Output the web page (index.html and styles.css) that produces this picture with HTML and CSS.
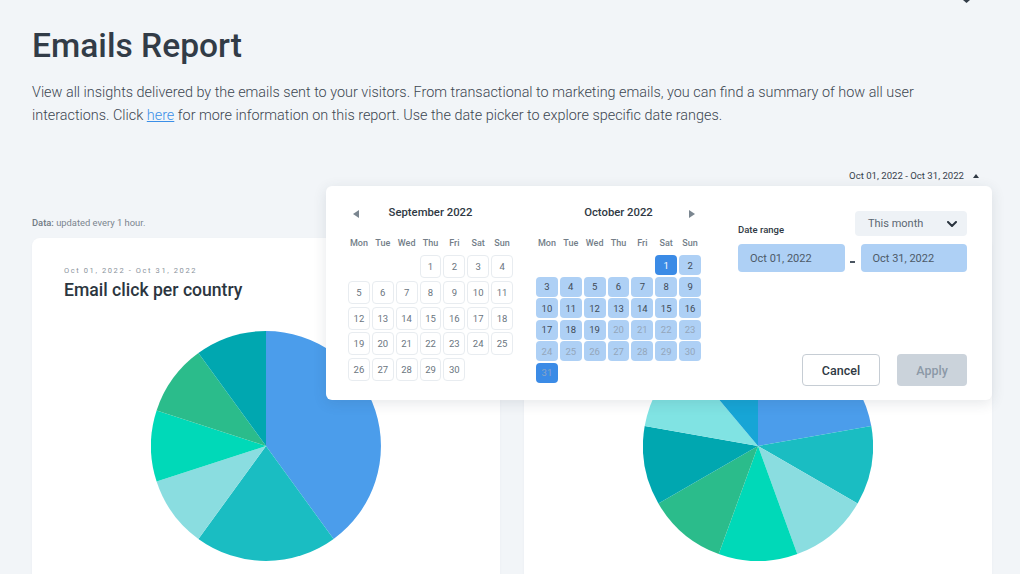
FILE: index.html
```html
<!DOCTYPE html>
<html lang="en">
<head>
<meta charset="utf-8">
<title>Emails Report</title>
<link rel="stylesheet" href="styles.css">
</head>
<body>
<div class="topbar"><svg class="top-icon" width="7" height="3" viewBox="0 0 7 3"><path d="M0 0h7L3.5 3z" fill="#333d48"/></svg></div>
<main class="page">
  <h1 class="title">Emails Report</h1>
  <p class="intro">View all insights delivered by the emails sent to your visitors. From transactional to marketing emails, you can find a summary of how all user interactions. Click <a href="#">here</a> for more information on this report. Use the date picker to explore specific date ranges.</p>

  <div class="range-bar">
    <button class="range-trigger" type="button">Oct 01, 2022 - Oct 31, 2022
      <svg width="6" height="4" viewBox="0 0 6 4"><path d="M0 4L3 0l3 4z" fill="#2f3944"/></svg>
    </button>

    <div class="picker">
      <div class="month">
        <div class="month-head">
          <svg class="nav nav-prev" width="6" height="8" viewBox="0 0 6 8"><path d="M6 0v8L0 4z" fill="#7b8690"/></svg>
          <span class="month-title">September 2022</span>
        </div>
        <div class="weekdays"><span>Mon</span><span>Tue</span><span>Wed</span><span>Thu</span><span>Fri</span><span>Sat</span><span>Sun</span></div>
        <div class="days days-sep">
          <span class="empty"></span><span class="empty"></span><span class="empty"></span>
          <span class="day">1</span><span class="day">2</span><span class="day">3</span><span class="day">4</span>
          <span class="day">5</span><span class="day">6</span><span class="day">7</span><span class="day">8</span><span class="day">9</span><span class="day">10</span><span class="day">11</span>
          <span class="day">12</span><span class="day">13</span><span class="day">14</span><span class="day">15</span><span class="day">16</span><span class="day">17</span><span class="day">18</span>
          <span class="day">19</span><span class="day">20</span><span class="day">21</span><span class="day">22</span><span class="day">23</span><span class="day">24</span><span class="day">25</span>
          <span class="day">26</span><span class="day">27</span><span class="day">28</span><span class="day">29</span><span class="day">30</span>
        </div>
      </div>

      <div class="month month-oct">
        <div class="month-head">
          <span class="month-title">October 2022</span>
          <svg class="nav nav-next" width="6" height="8" viewBox="0 0 6 8"><path d="M0 0v8l6-4z" fill="#7b8690"/></svg>
        </div>
        <div class="weekdays"><span>Mon</span><span>Tue</span><span>Wed</span><span>Thu</span><span>Fri</span><span>Sat</span><span>Sun</span></div>
        <div class="days days-oct">
          <span class="empty"></span><span class="empty"></span><span class="empty"></span><span class="empty"></span><span class="empty"></span>
          <span class="rday sel">1</span><span class="rday">2</span>
          <span class="rday">3</span><span class="rday">4</span><span class="rday">5</span><span class="rday">6</span><span class="rday">7</span><span class="rday">8</span><span class="rday">9</span>
          <span class="rday">10</span><span class="rday">11</span><span class="rday">12</span><span class="rday">13</span><span class="rday">14</span><span class="rday">15</span><span class="rday">16</span>
          <span class="rday">17</span><span class="rday">18</span><span class="rday">19</span><span class="rday off">20</span><span class="rday off">21</span><span class="rday off">22</span><span class="rday off">23</span>
          <span class="rday off">24</span><span class="rday off">25</span><span class="rday off">26</span><span class="rday off">27</span><span class="rday off">28</span><span class="rday off">29</span><span class="rday off">30</span>
          <span class="rday sel sel-off">31</span>
        </div>
      </div>

      <div class="panel">
        <div class="panel-top">
          <span class="label">Date range</span>
          <div class="select">
            <span>This month</span>
            <svg width="10" height="6" viewBox="0 0 10 6"><path d="M1 1l4 4 4-4" fill="none" stroke="#2a343e" stroke-width="2" stroke-linecap="round" stroke-linejoin="round"/></svg>
          </div>
        </div>
        <div class="inputs">
          <div class="date-input">Oct 01, 2022</div>
          <span class="dash"><i></i></span>
          <div class="date-input">Oct 31, 2022</div>
        </div>
        <div class="actions">
          <button class="btn btn-cancel" type="button">Cancel</button>
          <button class="btn btn-apply" type="button">Apply</button>
        </div>
      </div>
    </div>
  </div>

  <p class="data-note"><b>Data:</b> updated every 1 hour.</p>

  <div class="cards">
    <section class="card">
      <div class="card-date">Oct 01, 2022 - Oct 31, 2022</div>
      <h2 class="card-title">Email click per country</h2>
      <svg class="pie" width="230" height="230" viewBox="0 0 230 230">
        <path d="M115 115L115 0A115 115 0 0 1 182.6 208Z" fill="#4b9deb"/>
        <path d="M115 115L182.6 208A115 115 0 0 1 47.4 208Z" fill="#1abdc2"/>
        <path d="M115 115L47.4 208A115 115 0 0 1 5.6 150.5Z" fill="#8adde0"/>
        <path d="M115 115L5.6 150.5A115 115 0 0 1 5.6 79.5Z" fill="#00d9b8"/>
        <path d="M115 115L5.6 79.5A115 115 0 0 1 47.4 22Z" fill="#2bbc8b"/>
        <path d="M115 115L47.4 22A115 115 0 0 1 115 0Z" fill="#00a7b0"/>
      </svg>
    </section>
    <section class="card">
      <div class="card-date">Oct 01, 2022 - Oct 31, 2022</div>
      <h2 class="card-title">Email open per country</h2>
      <svg class="pie" width="230" height="230" viewBox="0 0 230 230">
        <path d="M115 115L115 0A115 115 0 0 1 228.3 95Z" fill="#4b9deb"/>
        <path d="M115 115L228.3 95A115 115 0 0 1 214.6 172.5Z" fill="#1abdc2"/>
        <path d="M115 115L214.6 172.5A115 115 0 0 1 154.3 223.1Z" fill="#8adde0"/>
        <path d="M115 115L154.3 223.1A115 115 0 0 1 75.7 223.1Z" fill="#00d9b8"/>
        <path d="M115 115L75.7 223.1A115 115 0 0 1 15.4 172.5Z" fill="#2bbc8b"/>
        <path d="M115 115L15.4 172.5A115 115 0 0 1 1.7 95Z" fill="#00a7b0"/>
        <path d="M115 115L1.7 95A115 115 0 0 1 41.1 26.9Z" fill="#80e3e3"/>
        <path d="M115 115L41.1 26.9A115 115 0 0 1 115 0Z" fill="#17a5d6"/>
      </svg>
    </section>
  </div>
</main>
</body>
</html>
```

FILE: styles.css
```css
body {
  margin: 0;
  background: #f2f5f8;
  font-family: Roboto, "Liberation Sans", sans-serif;
  color: #333d48;
  overflow: hidden;
}

.topbar {
  height: 3px;
  display: flex;
  justify-content: flex-end;
  padding-right: 50px;
}
.top-icon { display: block; }

.page {
  padding: 23px 28px 0 32px;
}

.title {
  margin: 0;
  font-size: 33.6px;
  line-height: 40px;
  font-weight: 500;
  color: #323c47;
}

.intro {
  margin: 15px 0 0;
  font-size: 14.4px;
  line-height: 23px;
  font-weight: 300;
  color: #3c4651;
  max-width: 900px;
}
.intro a {
  color: #3b8fe8;
  text-decoration: underline;
}

.range-bar {
  position: relative;
  display: flex;
  justify-content: flex-end;
  margin-top: 42px;
  padding-right: 13px;
  height: 14px;
}
.range-trigger {
  display: flex;
  align-items: center;
  gap: 9px;
  padding: 0;
  border: 0;
  background: none;
  font-family: inherit;
  font-size: 9.6px;
  line-height: 14px;
  color: #38424c;
}

.picker {
  position: absolute;
  top: 17px;
  right: 0;
  width: 666px;
  height: 214px;
  box-sizing: border-box;
  background: #fff;
  border-radius: 6px;
  box-shadow: 0 3px 14px rgba(40, 55, 70, 0.12);
  display: flex;
  align-items: stretch;
  padding: 18px 25px 14px 22px;
  z-index: 5;
}

.month { width: 165px; }
.month-oct { margin-left: 23px; }

.month-head {
  display: grid;
  grid-template-columns: 16px 1fr 16px;
  align-items: center;
  height: 16px;
}
.month-title {
  grid-column: 2;
  grid-row: 1;
  text-align: center;
  font-size: 11.3px;
  font-weight: 500;
  color: #2f3944;
}
.nav { display: block; margin-top: 4px; }
.nav-prev { grid-column: 1; grid-row: 1; margin-left: 5px; }
.nav-next { grid-column: 3; grid-row: 1; margin-left: 4px; }

.weekdays {
  display: grid;
  grid-template-columns: repeat(7, 1fr);
  column-gap: 2px;
  margin-top: 16px;
  font-size: 9px;
  line-height: 14px;
  font-weight: 500;
  color: #737e88;
  text-align: center;
}

.days {
  display: grid;
  grid-template-columns: repeat(7, 1fr);
  column-gap: 2px;
  margin-top: 5px;
  font-size: 9.5px;
}
.days-sep {
  grid-auto-rows: 23px;
  row-gap: 2.75px;
}
.days-oct {
  grid-auto-rows: 20px;
  row-gap: 1.6px;
}
.day {
  display: flex;
  align-items: center;
  justify-content: center;
  border: 1px solid #e8ecf0;
  border-radius: 4px;
  color: #6a7580;
}
.rday {
  display: flex;
  align-items: center;
  justify-content: center;
  border-radius: 4px;
  background: #aed0f5;
  color: #3e4a56;
}
.rday.off { color: #94a6ba; }
.rday.sel { background: #3b8be6; color: #fff; }
.rday.sel-off { color: #8aa5c6; }

.panel {
  margin-left: 37px;
  width: 229px;
  display: flex;
  flex-direction: column;
}
.panel-top {
  display: flex;
  justify-content: space-between;
  align-items: flex-end;
  margin-top: 7px;
}
.label {
  font-size: 9.5px;
  line-height: 12px;
  font-weight: 500;
  color: #2f3944;
}
.select {
  width: 112px;
  height: 25px;
  box-sizing: border-box;
  background: #eef2f6;
  border-radius: 4px;
  display: flex;
  align-items: center;
  justify-content: space-between;
  padding: 0 10px 0 13px;
  font-size: 11px;
  color: #5b6772;
}
.select svg { display: block; }

.inputs {
  display: flex;
  margin-top: 8px;
  height: 28px;
}
.date-input {
  flex: 1;
  background: #aed0f5;
  border-radius: 4px;
  padding-left: 12px;
  display: flex;
  align-items: center;
  font-size: 11px;
  color: #4d5a68;
}
.dash {
  width: 16px;
  display: flex;
  justify-content: center;
  padding-top: 17px;
  box-sizing: border-box;
}
.dash i {
  display: block;
  width: 5px;
  height: 1.5px;
  background: #4a5561;
}

.actions {
  margin-top: auto;
  display: flex;
  justify-content: flex-end;
  gap: 17px;
}
.btn {
  height: 32px;
  border-radius: 4px;
  font-family: inherit;
  font-size: 12.5px;
  font-weight: 500;
  padding: 0;
}
.btn-cancel {
  width: 78px;
  background: #fff;
  border: 1px solid #c6cdd4;
  color: #2f3944;
}
.btn-apply {
  width: 70px;
  background: #cbd3db;
  border: 0;
  color: #8c99a7;
}

.data-note {
  margin: 34px 0 0;
  font-size: 9.4px;
  line-height: 12px;
  color: #7b858f;
}
.data-note b { font-weight: 500; color: #6f7983; }

.cards {
  margin-top: 9px;
  display: grid;
  grid-template-columns: 1fr 1fr;
  gap: 24px;
}
.card {
  background: #fff;
  border-radius: 8px;
  height: 420px;
  padding: 28px 32px 0;
  box-shadow: 0 1px 3px rgba(40, 55, 70, 0.04);
}
.card-date {
  font-size: 7.5px;
  line-height: 10px;
  letter-spacing: 1.6px;
  color: #8a939c;
}
.card-title {
  margin: 3px 0 0;
  font-size: 17.6px;
  line-height: 22px;
  font-weight: 500;
  color: #2c3640;
}
.pie {
  display: block;
  margin: 30px auto 0;
}
```
